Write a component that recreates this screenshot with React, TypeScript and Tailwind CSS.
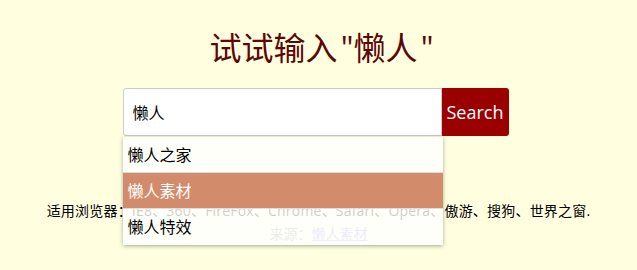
import React from "react";

const items = ["懒人之家", "懒人素材", "懒人特效"];

export default function App() {
    const active = 1;
    return (
        <div
            className="min-h-[270px] bg-[#ffffe0] text-black"
            style={{ fontFamily: '"Open Sans", "Noto Sans CJK SC", sans-serif' }}
        >
            {/* 标题 */}
            <h1 className="pt-[27px] pl-[6px] text-center text-[32px] leading-[42px] text-[#5c0606]">
                试试输入{"\u200A"}"懒人{"\u200A"}"
            </h1>

            {/* 搜索框 */}
            <div className="mt-[19px] flex justify-center pr-[6px]">
                <div className="relative flex w-[386px]">
                    <input
                        defaultValue="懒人"
                        className="h-[48px] w-[319px] rounded-l-[3px] border border-[#cccccc] bg-white pl-[9px] text-[16px] outline-none"
                    />
                    <button className="h-[48px] w-[67px] rounded-r-[3px] bg-[#9b0000] text-[18px] text-white">
                        Search
                    </button>

                    {/* 下拉提示 */}
                    <ul className="absolute left-0 top-[49px] z-10 w-[320px] bg-white/80 shadow-[0_1px_4px_rgba(0,0,0,0.35)]">
                        {items.map((t, i) => (
                            <li
                                key={t}
                                className={`h-[36px] border-b border-[#dddddd] pl-[5px] text-[16px] leading-[36px] last:border-b-0 ${i === active ? "bg-[#d38c6b] text-white" : "text-black"
                                    }`}
                            >
                                {t}
                            </li>
                        ))}
                    </ul>
                </div>
            </div>

            {/* 说明 */}
            <p className="mt-[64px] text-center text-[14px] leading-[22px] tracking-[0.2px]">
                适用浏览器：IE8、360、FireFox、Chrome、Safari、Opera、傲游、搜狗、世界之窗.
            </p>
            <p className="mt-[1px] text-center text-[14px] leading-[22px] text-[#999999]">
                来源：<a href="#" className="text-[#9c9cf0] underline">懒人素材</a>
            </p>
        </div>
    );
}
